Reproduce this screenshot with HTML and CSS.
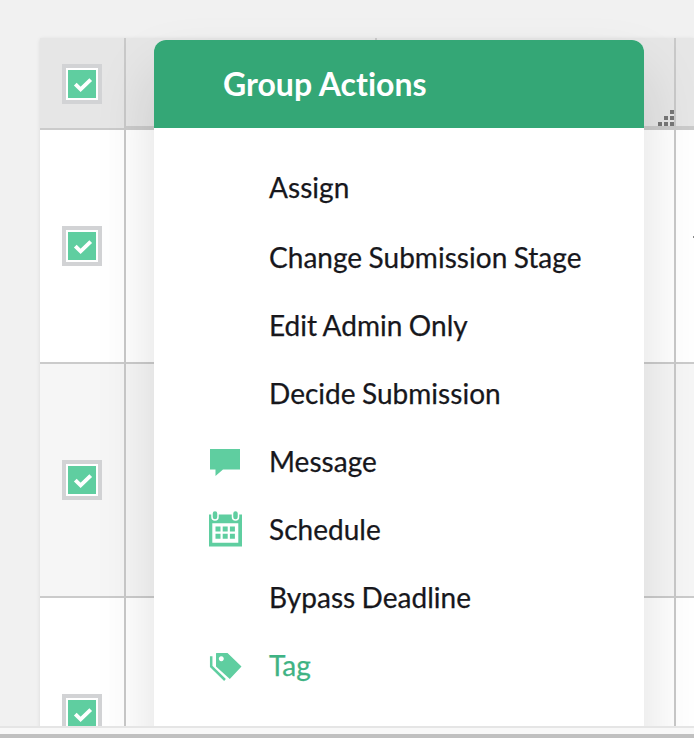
FILE: index.html
```
<!DOCTYPE html>
<html lang="en">
<head>
<meta charset="utf-8">
<title>Submissions</title>
<link rel="stylesheet" href="styles.css">
</head>
<body>
<svg class="defs" width="0" height="0">
  <symbol id="check" viewBox="0 0 28 28"><path d="M7.300 14.200L12.600 19.300L22.700 9.700" fill="none" stroke="#fff" stroke-width="3.900"/></symbol>
</svg>
<main class="viewport">
  <div class="table">
    <div class="row head">
      <div class="cell first"><span class="box"><svg><use href="#check"/></svg></span></div>
      <div class="cell second"></div>
      <div class="cell third"><svg class="grip" viewBox="0 0 16 16"><path d="M12 0h4v4h-4zM6 6h4v4H6zM12 6h4v4h-4zM0 12h4v4H0zM6 12h4v4H6zM12 12h4v4h-4z" fill="#777"/></svg></div>
      <div class="cell last"></div>
    </div>
    <div class="row">
      <div class="cell first"><span class="box"><svg><use href="#check"/></svg></span></div>
      <div class="cell wide"></div>
      <div class="cell last"><i class="dash"></i></div>
    </div>
    <div class="row alt">
      <div class="cell first"><span class="box"><svg><use href="#check"/></svg></span></div>
      <div class="cell wide"></div>
      <div class="cell last"></div>
    </div>
    <div class="row">
      <div class="cell first"><span class="box"><svg><use href="#check"/></svg></span></div>
      <div class="cell wide"></div>
      <div class="cell last"></div>
    </div>
  </div>
  <section class="menu">
    <h1>Group Actions</h1>
    <ul>
      <li class="assign"><span>Assign</span></li>
      <li><span>Change Submission Stage</span></li>
      <li><span>Edit Admin Only</span></li>
      <li><span>Decide Submission</span></li>
      <li><svg class="icon" viewBox="0 0 36 36"><path d="M3 5h30v20.500H16L8.500 32v-6.500H3z"/></svg><span>Message</span></li>
      <li><svg class="icon" viewBox="0 0 36 36"><path fill-rule="evenodd" d="M2 2.500h33v32H2zM5.300 11.200v19.500h26v-19.500z"/><path d="M8.500 14.500h5v5h-5zM15.700 14.500h5v5h-5zM22.900 14.500h5v5h-5zM8.500 21.700h5v5h-5zM15.700 21.700h5v5h-5zM22.900 21.700h5v5h-5z"/><rect class="ring" x="5" y="-1.500" width="6" height="9.500" rx="3"/><rect class="ring" x="25.500" y="-1.500" width="6" height="9.500" rx="3"/></svg><span>Schedule</span></li>
      <li><span>Bypass Deadline</span></li>
      <li class="active"><svg class="icon" viewBox="0 -1 36 36"><path fill-rule="evenodd" d="M9 4.500Q9 4 9.500 4H20.500L34.500 17.500L22.800 30L9 17.500zM14.300 7.200a2.500 2.500 0 1 0 .01 0z"/><path class="edge" d="M4.200 7.200V17.500L18 31"/></svg><span>Tag</span></li>
    </ul>
  </section>
</main>
<footer class="scroll"></footer>
</body>
</html>
```
FILE: styles.css
```
* { box-sizing: border-box; }
body {
  margin: 0;
  height: 738px;
  overflow: hidden;
  background: #f1f1f1;
  font-family: Lato, sans-serif;
}
.defs { position: absolute; }
.viewport {
  position: relative;
  height: 726px;
  padding: 38px 0 0 40px;
  overflow: hidden;
}
.table { box-shadow: 0 1px 4px rgba(0, 0, 0, .1); }
.row { display: flex; height: 234px; background: #fff; }
.row.alt { background: #f6f6f6; }
.row.head { height: 92px; background: #e6e6e6; }
.cell { border-right: 2px solid #c9c9c9; border-bottom: 2px solid #cbcbcb; }
.first { width: 86px; padding: 96px 0 0 22px; }
.head .first { padding-top: 26px; }
.head .cell:not(.first) { border-bottom: 4px solid #cbcbcb; }
.second { width: 251px; }
.third { width: 299px; display: flex; justify-content: flex-end; align-items: flex-end; }
.wide { width: 550px; }
.last { flex: 1; border-right: 0; }
.row:not(.head) .last { display: flex; justify-content: flex-end; padding-top: 106px; }
.dash { width: 1px; height: 2px; background: #888; }
.grip { display: block; width: 16px; height: 16px; }
.box {
  display: block;
  width: 40px;
  height: 40px;
  padding: 2px;
  border: 4px solid #d2d3d5;
  background: #fff;
}
.box svg { display: block; width: 28px; height: 28px; background: #5fcea0; }
.menu {
  position: absolute;
  left: 154px;
  top: 40px;
  width: 490px;
  height: 760px;
  border-radius: 12px 12px 0 0;
  background: #fff;
  box-shadow: 0 32px 60px rgba(0, 0, 0, .13);
}
.menu h1 {
  margin: 0;
  height: 88px;
  padding-left: 69px;
  border-radius: 12px 12px 0 0;
  background: #34a776;
  color: #fff;
  font-size: 32px;
  font-weight: 700;
  font-variant-ligatures: none;
  line-height: 88px;
}
.menu ul { margin: 0; padding: 26px 0 0; list-style: none; }
.menu li {
  display: flex;
  align-items: center;
  height: 68px;
  padding-left: 115px;
  color: #17171c;
  font-size: 28px;
}
.menu li span {
  padding-bottom: 2px;
  letter-spacing: .03px;
  word-spacing: -.8px;
  -webkit-text-stroke: .25px currentColor;
}
.menu li.assign { height: 70px; padding-bottom: 2px; }
.menu li.active { color: #3fb384; }
.icon {
  width: 36px;
  height: 38px;
  margin: 0 26px 0 -62px;
  fill: #5fcea0;
  overflow: visible;
}
.ring { stroke: #fff; stroke-width: 1.5; }
.edge { fill: none; stroke: #5fcea0; stroke-width: 2.5; }
.scroll {
  height: 12px;
  border-top: 2px solid #e5e5e5;
  border-bottom: 4px solid #c0c0c0;
  background: #f8f8f8;
}
```
